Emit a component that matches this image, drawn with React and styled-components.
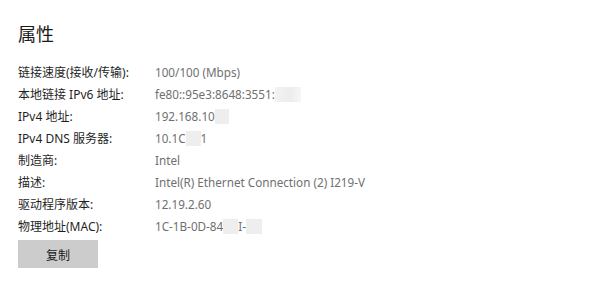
import React from "react"
import styled, { createGlobalStyle } from "styled-components"

const GlobalStyle = createGlobalStyle`
  html, body {
    margin: 0;
    padding: 0;
    background: #ffffff;
  }
  body {
    font-family: "Noto Sans", "Noto Sans CJK SC", sans-serif;
  }
`

const Page = styled.div`
  width: 600px;
  height: 288px;
  box-sizing: border-box;
  padding: 21px 18px 0;
  background: #fff;
`

const Title = styled.h2`
  margin: 0 0 16px;
  font-size: 18px;
  font-weight: 400;
  line-height: 24px;
  color: #1a1a1a;
  font-family: "Noto Sans CJK SC", sans-serif;
`

const Grid = styled.div`
  display: grid;
  grid-template-columns: 137px auto;
  grid-auto-rows: 22px;
  align-items: center;
  font-size: 12px;
`

const Label = styled.div`
  color: #1f1f1f;
  white-space: nowrap;
`

const Value = styled.div`
  color: #707070;
  font-size: 11.7px;
  white-space: nowrap;
  display: flex;
  align-items: center;
`

const Redact = styled.span`
  display: inline-block;
  width: ${p => p.$w}px;
  height: 15px;
  background: ${p => p.$fade
    ? "linear-gradient(to right, #f3f3f3, #ececec 60%, #f6f6f6)"
    : "#eeeeee"};
`

const CopyButton = styled.button`
  margin-top: 3px;
  width: 80px;
  height: 28px;
  border: none;
  background: #cccccc;
  color: #1a1a1a;
  font-size: 12px;
  font-family: "Noto Sans CJK SC", sans-serif;
  padding: 0;
`

const rows = [
  ["链接速度(接收/传输):", "100/100 (Mbps)"],
  ["本地链接 IPv6 地址:", <>fe80::95e3:8648:3551:<Redact $w={26} $fade /></>],
  ["IPv4 地址:", <>192.168.10<Redact $w={14} /></>],
  ["IPv4 DNS 服务器:", <>10.1C<Redact $w={15} />1</>],
  ["制造商:", "Intel"],
  ["描述:", "Intel(R) Ethernet Connection (2) I219-V"],
  ["驱动程序版本:", "12.19.2.60"],
  ["物理地址(MAC):", <>1C-1B-0D-84<Redact $w={15} />I-<Redact $w={16} /></>],
]

export default function App() {
  return (
    <Page>
      <GlobalStyle />
      <Title>属性</Title>
      <Grid>
        {rows.map(([k, v], i) => (
          <React.Fragment key={i}>
            <Label>{k}</Label>
            <Value>{v}</Value>
          </React.Fragment>
        ))}
      </Grid>
      <CopyButton>复制</CopyButton>
    </Page>
  )
}
